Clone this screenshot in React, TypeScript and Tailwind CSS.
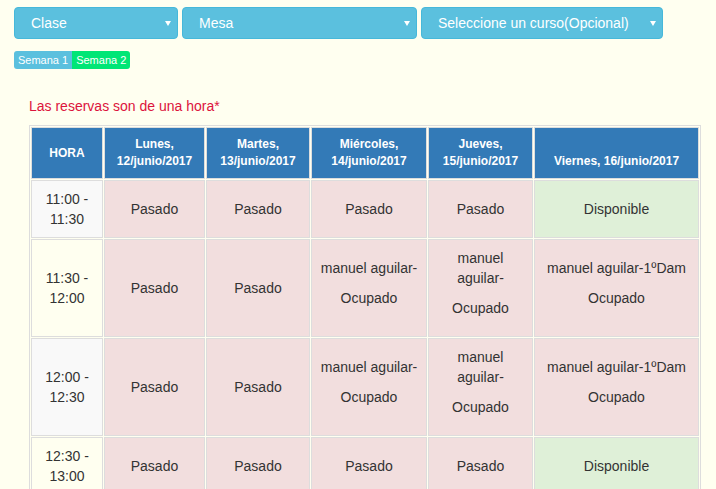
import React from "react";

type Cell =
  | { kind: "pasado" }
  | { kind: "disponible" }
  | { kind: "ocupado"; name: string };

const rows: { time: [string, string]; striped: boolean; cells: Cell[] }[] = [
  {
    time: ["11:00 -", "11:30"],
    striped: true,
    cells: [
      { kind: "pasado" },
      { kind: "pasado" },
      { kind: "pasado" },
      { kind: "pasado" },
      { kind: "disponible" },
    ],
  },
  {
    time: ["11:30 -", "12:00"],
    striped: false,
    cells: [
      { kind: "pasado" },
      { kind: "pasado" },
      { kind: "ocupado", name: "manuel aguilar-" },
      { kind: "ocupado", name: "manuel aguilar-" },
      { kind: "ocupado", name: "manuel aguilar-1ºDam" },
    ],
  },
  {
    time: ["12:00 -", "12:30"],
    striped: true,
    cells: [
      { kind: "pasado" },
      { kind: "pasado" },
      { kind: "ocupado", name: "manuel aguilar-" },
      { kind: "ocupado", name: "manuel aguilar-" },
      { kind: "ocupado", name: "manuel aguilar-1ºDam" },
    ],
  },
  {
    time: ["12:30 -", "13:00"],
    striped: false,
    cells: [
      { kind: "pasado" },
      { kind: "pasado" },
      { kind: "pasado" },
      { kind: "pasado" },
      { kind: "disponible" },
    ],
  },
];

function FakeSelect({ label, width }: { label: string; width: string }) {
  return (
    <div
      className={`relative h-[32px] ${width} rounded-[4px] border border-[#46b8da] bg-[#5bc0de] pl-[16px] text-[14px] leading-[30px] text-white`}
    >
      {label}
      <span className="absolute right-[6px] top-[13px] h-0 w-0 border-l-[3px] border-r-[3px] border-t-[5px] border-l-transparent border-r-transparent border-t-white" />
    </div>
  );
}

export default function App() {
  const th =
    "border border-[#ddd] bg-[#337ab7] text-white font-bold text-[12px] leading-[17px] px-2 py-2 text-center align-bottom";
  const td = "border border-[#ddd] px-2 py-2 text-center align-middle text-[14px] leading-5 text-[#333]";
  return (
    <div
      className="min-h-[489px] w-full bg-[#fffff0] pl-[14px] pt-[7px] text-[#333]"
      style={{ fontFamily: '"Liberation Sans", Arial, sans-serif' }}
    >
      <div className="flex gap-[4px]">
        <FakeSelect label="Clase" width="w-[164px]" />
        <FakeSelect label="Mesa" width="w-[235px]" />
        <FakeSelect label="Seleccione un curso(Opcional)" width="w-[242px]" />
      </div>
      <div className="mt-[12px] flex">
        <span className="h-[18px] rounded-l-[3px] bg-[#5bc0de] px-[4px] text-[11px] leading-[18px] text-white">
          Semana 1
        </span>
        <span className="h-[18px] rounded-r-[3px] bg-[#00e676] px-[4px] text-[11px] leading-[18px] text-white">
          Semana 2
        </span>
      </div>
      <div className="pl-[15px]">
        <p className="mt-[27px] text-[14px] leading-5 text-[#dc143c]">Las reservas son de una hora*</p>
        <table className="mt-[9px] w-[672px] table-fixed border-separate border-spacing-[1px] border border-[#ddd]">
          <thead>
            <tr>
              <th className={`${th} w-[72px] !align-middle`}>HORA</th>
              <th className={`${th} w-[101px]`}>
                Lunes,
                <br />
                12/junio/2017
              </th>
              <th className={`${th} w-[104px]`}>
                Martes,
                <br />
                13/junio/2017
              </th>
              <th className={`${th} w-[116px]`}>
                Miércoles,
                <br />
                14/junio/2017
              </th>
              <th className={`${th} w-[105px]`}>
                Jueves,
                <br />
                15/junio/2017
              </th>
              <th className={`${th} w-[165px]`}>Viernes, 16/junio/2017</th>
            </tr>
          </thead>
          <tbody>
            {rows.map((r, i) => (
              <tr key={i}>
                <td className={`${td} ${r.striped ? "bg-[#f9f9f9]" : ""}`}>
                  {r.time[0]}
                  <br />
                  {r.time[1]}
                </td>
                {r.cells.map((c, j) => {
                  if (c.kind === "pasado")
                    return (
                      <td key={j} className={`${td} bg-[#f2dede]`}>
                        Pasado
                      </td>
                    );
                  if (c.kind === "disponible")
                    return (
                      <td key={j} className={`${td} bg-[#dff0d8]`}>
                        Disponible
                      </td>
                    );
                  return (
                    <td key={j} className={`${td} bg-[#f2dede]`}>
                      <p className="mb-[10px]">{c.name}</p>
                      <p className="mb-[10px]">Ocupado</p>
                    </td>
                  );
                })}
              </tr>
            ))}
          </tbody>
        </table>
      </div>
    </div>
  );
}
